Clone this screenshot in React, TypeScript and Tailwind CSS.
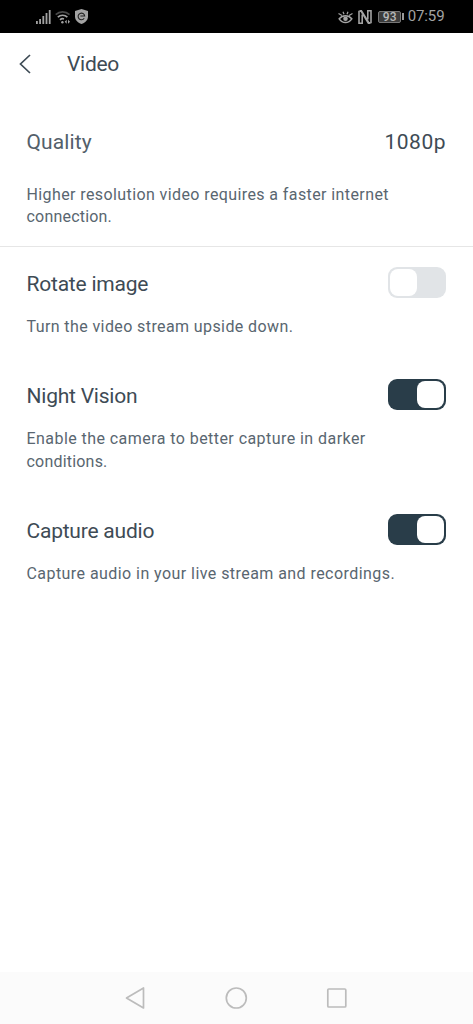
import React, { useState } from "react";

const StatusBar = () => (
  <div className="flex h-[33px] items-center justify-between bg-black pr-[28.5px] pl-9 text-[#a3a3a3]">
    <div className="flex items-center gap-1">
      <svg width="15" height="14" viewBox="0 0 15 14" fill="currentColor">
        <rect x="0" y="11" width="1.8" height="3" />
        <rect x="3.2" y="9" width="1.8" height="5" />
        <rect x="6.4" y="6" width="1.8" height="8" />
        <rect x="9.6" y="3" width="1.8" height="11" />
        <rect x="12.8" y="0" width="1.8" height="14" />
      </svg>
      <svg width="16" height="14" viewBox="0 0 16 14" fill="none" stroke="currentColor" strokeWidth="1.6">
        <path d="M.7 4.6a10 10 0 0 1 13.8 0" opacity=".45" />
        <path d="M2.8 7.2a7 7 0 0 1 9.6 0M5 9.8a4 4 0 0 1 4-.9" />
        <circle cx="7.4" cy="12.3" r="1.2" fill="currentColor" stroke="none" />
        <path d="m11.7 9.8-2 2 2 2zM13 9.8l2 2-2 2z" fill="currentColor" stroke="none" />
      </svg>
      <svg width="13" height="15" viewBox="0 0 13 15">
        <path d="M6.5 0 13 2v5.5c0 3.5-2.6 6-6.5 7.5C2.6 13.5 0 11 0 7.5V2z" fill="currentColor" />
        <path d="M9.2 9.2A3.3 3.3 0 1 1 9.7 7H5.4" fill="none" stroke="#222" strokeWidth="1.1" />
      </svg>
    </div>
    <div className="flex items-center">
      <svg width="15" height="14" viewBox="0 0 15 14" fill="none" stroke="currentColor" strokeWidth="1.5">
        <path d="M1.2 8.8C4.5 4.6 10.5 4.6 13.8 8.8 10.5 13.8 4.5 13.8 1.2 8.8z" />
        <path d="M.5 3.500 4 5.500M5 1.800l1 2.500M10 1.800 9 4.300M14.500 3.500 11 5.500" strokeWidth="1.2" />
        <circle cx="7.5" cy="8.8" r="2.3" fill="currentColor" stroke="none" />
      </svg>
      <svg width="14" height="14" viewBox="0 0 14 14" fill="none" stroke="currentColor" className="ml-[5px]">
        <path d="M1 .8v12.400h3.200V4.500M13 13.200V.8H9.800v8.700" strokeWidth="1.6" />
        <path d="M1.500 1h1.800l7.200 11.500M3.500 1.500l7 11.500h2" strokeWidth="2" />
      </svg>
      <div className="ml-[6px] flex h-3 w-[23px] items-center justify-center rounded-[2px] border border-[#777] bg-[#3c3c3c] font-[Roboto] text-[12px] leading-none font-medium text-[#b8b8b8]">
        93
      </div>
      <div className="ml-px h-[7px] w-[1.5px] bg-[#999]" />
      <span className="ml-[4px] font-[Roboto] text-[15px] leading-none tracking-[-0.1px]">07:59</span>
    </div>
  </div>
);

const Switch = ({ on, onToggle, label }: { on: boolean; onToggle: () => void; label: string }) => (
  <button
    role="switch"
    aria-checked={on}
    aria-label={label}
    onClick={onToggle}
    className={`flex h-[31px] w-[58px] shrink-0 rounded-[9px] p-[2px] ${
      on ? "justify-end bg-[#293d49]" : "justify-start bg-[#e1e4e7]"
    }`}
  >
    <span className="h-[27px] w-[27px] rounded-[8px] bg-white" />
  </button>
);

interface Line {
  text: string;
  className: string;
}

const Description = ({ lines }: { lines: Line[] }) => (
  <p className="mt-[18px] text-[16px] leading-[22.4px] text-[#596670]">
    {lines.map((line) => (
      <span key={line.text} className={`block whitespace-nowrap ${line.className}`}>
        {line.text}
      </span>
    ))}
  </p>
);

interface SettingProps {
  title: string;
  lines: Line[];
  initial: boolean;
}

const Setting = ({ title, lines, initial }: SettingProps) => {
  const [on, setOn] = useState(initial);
  return (
    <section>
      <div className="flex h-[31px] items-center justify-between">
        <h2 className="pt-[3px] text-[21px] leading-[31px] tracking-[-0.22px] text-[#3e4b55]">{title}</h2>
        <Switch on={on} onToggle={() => setOn(!on)} label={title} />
      </div>
      <Description lines={lines} />
    </section>
  );
};

const App = () => (
  <div className="flex h-screen flex-col bg-white font-[Roboto,sans-serif]">
    <StatusBar />
    <header className="flex h-[62px] items-center pl-[19px] text-[#3e4b55]">
      <svg width="12" height="20" viewBox="0 0 12 20" fill="none" stroke="currentColor" strokeWidth="1.7">
        <path d="M11 1 1.5 10 11 19" />
      </svg>
      <h1 className="ml-9 pt-px text-[21px] leading-none tracking-[-0.3px]">Video</h1>
    </header>
    <main className="flex-1">
      <section className="h-[152px] border-b border-[#e6e6e6] pt-8 pr-[27px] pl-[26.5px]">
        <div className="flex h-[31px] items-center justify-between text-[21px] text-[#3e4b55]">
          <h2 className="pt-px tracking-[0.1px] text-[#53606a]">Quality</h2>
          <span className="pt-px tracking-[0.5px]">1080p</span>
        </div>
        <div className="pt-2">
          <Description
            lines={[
              { text: "Higher resolution video requires a faster internet", className: "tracking-[0.4px]" },
              { text: "connection.", className: "tracking-[0.2px]" },
            ]}
          />
        </div>
      </section>
      <div className="flex flex-col gap-[41px] pt-5 pr-[27px] pl-[26.5px]">
        <Setting
          title="Rotate image"
          lines={[{ text: "Turn the video stream upside down.", className: "tracking-[0.4px]" }]}
          initial={false}
        />
        <Setting
          title="Night Vision"
          lines={[
            { text: "Enable the camera to better capture in darker", className: "tracking-[0.44px]" },
            { text: "conditions.", className: "tracking-[0.2px]" },
          ]}
          initial={true}
        />
        <Setting
          title="Capture audio"
          lines={[{ text: "Capture audio in your live stream and recordings.", className: "tracking-[0.44px]" }]}
          initial={true}
        />
      </div>
    </main>
    <nav className="flex h-[52px] items-center bg-[#fbfbfb] pl-[125px] text-[#bcbcbc]">
      <svg width="223" height="24" viewBox="0 0 223 24" fill="none" stroke="currentColor" strokeWidth="1.7" strokeLinejoin="round">
        <path d="M18.5 2v20L1.5 12z" />
        <circle cx="111.3" cy="12" r="10" />
        <rect x="202.8" y="3" width="18" height="18" rx="1" />
      </svg>
    </nav>
  </div>
);

export default App;
